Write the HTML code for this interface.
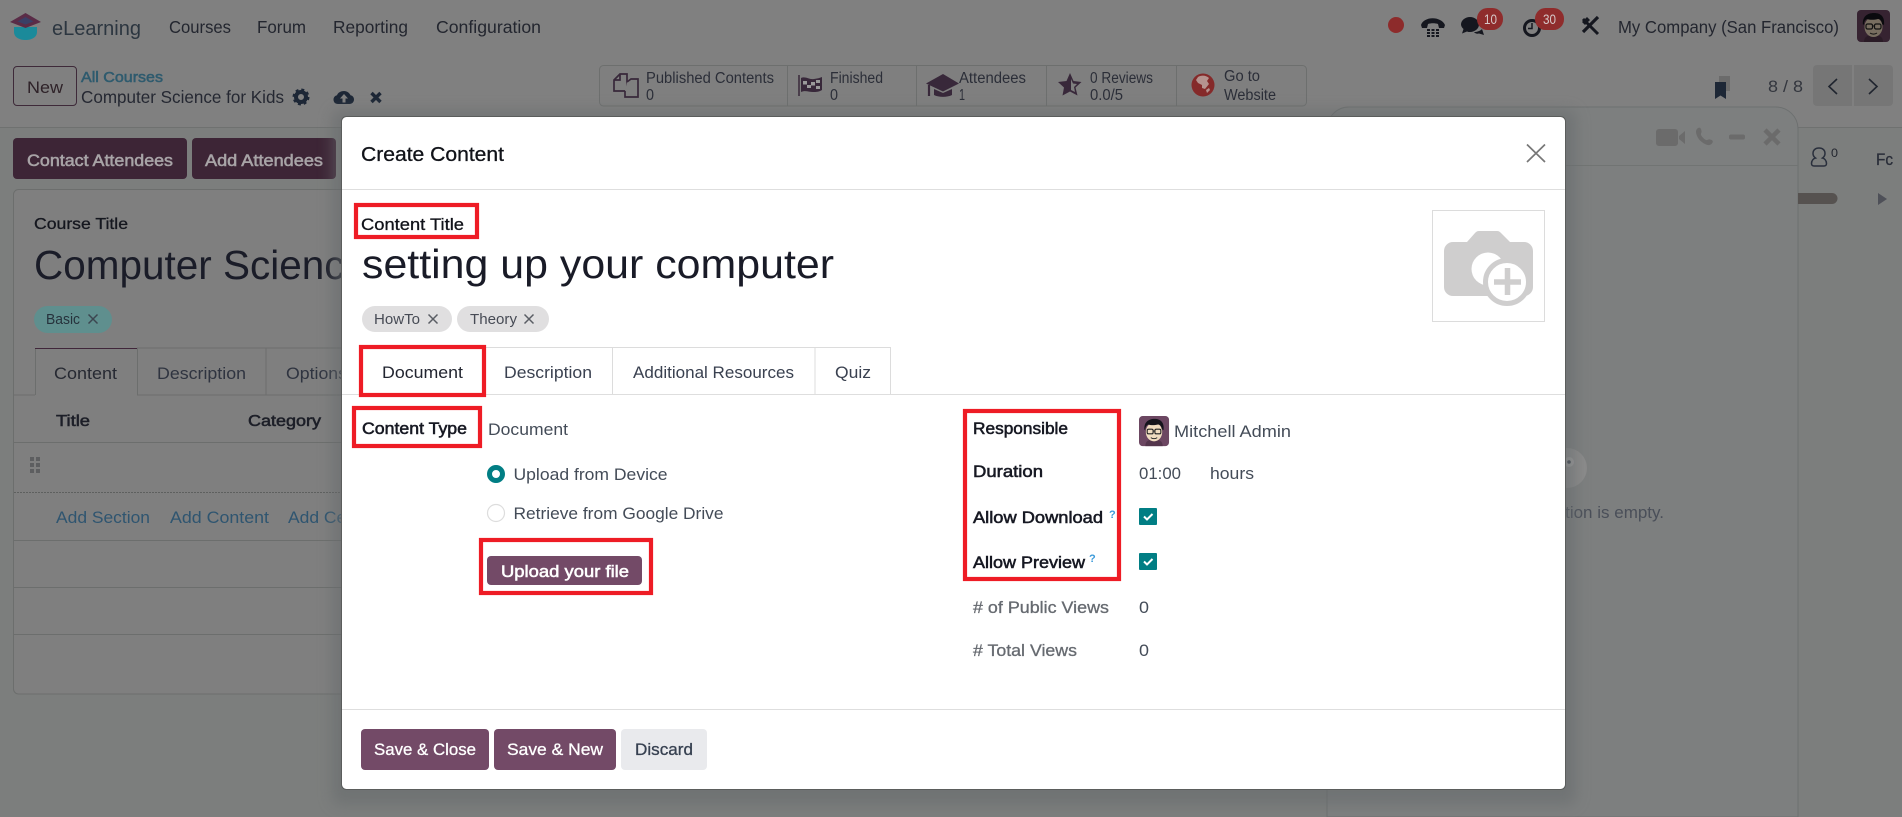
<!DOCTYPE html>
<html lang="en">
<head>
<meta charset="utf-8">
<title>Create Content</title>
<style>
html,body{margin:0;padding:0;width:1902px;height:817px;overflow:hidden;background:#7c7e7d}
svg{display:block}
text{font-family:"Liberation Sans",Arial,sans-serif;white-space:pre}
.b{font-weight:700}
.m{stroke-width:.3px}
.s{stroke-width:.55px}
</style>
</head>
<body>
<svg xmlns="http://www.w3.org/2000/svg" width="1902" height="817" viewBox="0 0 1902 817">
<defs>
<filter id="bl" x="-10%" y="-10%" width="120%" height="120%"><feGaussianBlur stdDeviation="7"/></filter>
<g id="av">
<rect x="0" y="0" width="33" height="32" rx="4" fill="#6c4762"/>
<path d="M7 32c0-5 3-7 9.500-7S26 27 26 32z" fill="#54364c"/>
<ellipse cx="16.500" cy="17" rx="9" ry="10" fill="#f0dcc0"/>
<path d="M6 15C5 7 10 3 17 3s11 4 10 12l-2-1c0-3-2-5-4-5-4 1-8 1-11 0-2 1-3 3-3 5z" fill="#15141c"/>
<rect x="9" y="14" width="6.500" height="5" rx="1.500" fill="none" stroke="#222" stroke-width="1.200"/>
<rect x="17.500" y="14" width="6.500" height="5" rx="1.500" fill="none" stroke="#222" stroke-width="1.200"/>
<path d="M15.500 16h2M13 23c2 1.500 5 1.500 7 0" fill="none" stroke="#222" stroke-width="1"/>
</g>
</defs>

<!-- page background -->
<rect width="1902" height="817" fill="#7c7e7d"/>
<rect width="1902" height="127" fill="#808080"/>
<rect y="127" width="1902" height="1" fill="#6f7170"/>

<!-- logo -->
<path d="M14 27h23v5c0 5-5 8-11.500 8S14 37 14 32z" fill="#1b8a9a"/>
<path d="M25.500 13L41 22 25.500 28 10 22z" fill="#5a2c47"/>
<path d="M25.500 17l8 4.500-8 3-8-3z" fill="#3a3f66"/>

<!-- top nav -->
<text x="52" y="35" font-size="20" fill="#2c3640" textLength="89" lengthAdjust="spacingAndGlyphs">eLearning</text>
<text x="169" y="33" font-size="17.500" fill="#23262f" textLength="62" lengthAdjust="spacingAndGlyphs">Courses</text>
<text x="257" y="33" font-size="17.500" fill="#23262f" textLength="49" lengthAdjust="spacingAndGlyphs">Forum</text>
<text x="333" y="33" font-size="17.500" fill="#23262f" textLength="75" lengthAdjust="spacingAndGlyphs">Reporting</text>
<text x="436" y="33" font-size="17.500" fill="#23262f" textLength="105" lengthAdjust="spacingAndGlyphs">Configuration</text>

<!-- nav right -->
<circle cx="1396" cy="25" r="8" fill="#8d2b2b"/>
<path d="M1421 25c3-9 20-9 24 0l-1 3h-5l-1-4c-3-1-7-1-10 0l-1 4h-5z" fill="#15171f"/>
<g fill="#15171f"><rect x="1427" y="29" width="3" height="2"/><rect x="1431.500" y="29" width="3" height="2"/><rect x="1436" y="29" width="3" height="2"/><rect x="1427" y="32" width="3" height="2"/><rect x="1431.500" y="32" width="3" height="2"/><rect x="1436" y="32" width="3" height="2"/><rect x="1427" y="35" width="3" height="2"/><rect x="1431.500" y="35" width="3" height="2"/><rect x="1436" y="35" width="3" height="2"/></g>
<path d="M1470 17c5 0 9 3.500 9 7.500s-4 7.500-9 7.500c-1 0-2 0-3-.500l-5 2 1.500-4.500c-1.500-1.300-2.500-3-2.500-4.500 0-4 4-7.500 9-7.500z" fill="#15171f"/>
<path d="M1474 32c3 0 6-1 8-3l2 6-5-1.500c-2 .500-4 0-5-1.500z" fill="#15171f"/>
<rect x="1477" y="8" width="26" height="22" rx="10.500" fill="#8f2c2c"/>
<text x="1484" y="24" font-size="13.500" fill="#d6c9c9" textLength="13" lengthAdjust="spacingAndGlyphs">10</text>
<circle cx="1532" cy="28" r="7.500" fill="none" stroke="#15171f" stroke-width="3"/>
<path d="M1532 23v5.500h-4" fill="none" stroke="#15171f" stroke-width="1.500"/>
<rect x="1535" y="8" width="29" height="22" rx="10.500" fill="#8f2c2c"/>
<text x="1543" y="24" font-size="13.500" fill="#d6c9c9" textLength="13" lengthAdjust="spacingAndGlyphs">30</text>
<path d="M1598 17l-15 15" stroke="#15171f" stroke-width="3.200" fill="none"/>
<path d="M1583 19l15 15" stroke="#15171f" stroke-width="3" fill="none"/>
<path d="M1582 22l5-5 3 3-5 5z" fill="#15171f"/>
<text x="1618" y="33" font-size="17.500" fill="#23262f" textLength="221" lengthAdjust="spacingAndGlyphs">My Company (San Francisco)</text>
<g transform="translate(1857 10)"><use href="#av"/><rect width="33" height="32" rx="4" fill="#000" opacity=".5"/></g>

<!-- control panel -->
<rect x="13.500" y="66.500" width="63" height="39" rx="3.500" fill="#808080" stroke="#3e2a39"/>
<text x="27" y="93" font-size="17" fill="#2e2228" textLength="36" lengthAdjust="spacingAndGlyphs">New</text>
<text x="81" y="82" font-size="15" fill="#2f5b6e" stroke="#2f5b6e" class="s" textLength="82" lengthAdjust="spacingAndGlyphs">All Courses</text>
<text x="81" y="103" font-size="17.500" fill="#252832" textLength="203" lengthAdjust="spacingAndGlyphs">Computer Science for Kids</text>
<circle cx="301" cy="97" r="5" fill="none" stroke="#1d2736" stroke-width="4"/>
<circle cx="301" cy="97" r="7.500" fill="none" stroke="#1d2736" stroke-width="2" stroke-dasharray="3 2.900"/>
<path d="M338 104c-3 0-4.500-2-4.500-4.500 0-2 1.500-4 3.500-4.300 1-2.700 4-4.200 7-4.200 3 0 5.500 1.800 6.500 4.300 2.300.400 3.500 2.200 3.500 4.200 0 2.500-2 4.500-4.500 4.500z" fill="#1d2736"/>
<path d="M344 94l-4 4.500h2.500v4h3v-4h2.500z" fill="#808080"/>
<path d="M371.500 93l9 9m0-9l-9 9" stroke="#1d2736" stroke-width="3.400" fill="none"/>

<!-- stat buttons -->
<rect x="599.500" y="65.500" width="707" height="40.500" rx="4" fill="#7f7f7f" stroke="#6d6f6e"/>
<g fill="#6d6f6e"><rect x="787" y="66" width="1" height="40"/><rect x="916" y="66" width="1" height="40"/><rect x="1046" y="66" width="1" height="40"/><rect x="1176" y="66" width="1" height="40"/></g>
<path d="M614 80l6-6h7v17h-13zM620 74v6h-6" fill="none" stroke="#38283a" stroke-width="1.700"/>
<path d="M627 82l4-3h7v18h-13V91" fill="#7f7f7f" stroke="#38283a" stroke-width="1.700"/>
<text x="646" y="83" font-size="15.500" fill="#2b2e38" textLength="128" lengthAdjust="spacingAndGlyphs">Published Contents</text>
<text x="646" y="100" font-size="15.500" fill="#2b2e38" textLength="8" lengthAdjust="spacingAndGlyphs">0</text>
<path d="M799 75v21" stroke="#38283a" stroke-width="1.500"/>
<path d="M801 78c5-2 8 2 13 1 3-.500 6-1 8-2v13c-3 2-6 2-9 2-4 0-8-2-12 0z" fill="#38283a"/>
<g fill="#9a9a9a"><rect x="803" y="81" width="4" height="3.500"/><rect x="811" y="82" width="4" height="3.500"/><rect x="807" y="85" width="4" height="3"/><rect x="816" y="80" width="4" height="3"/><rect x="816" y="86" width="4" height="3"/></g>
<text x="830" y="83" font-size="15.500" fill="#2b2e38" textLength="53" lengthAdjust="spacingAndGlyphs">Finished</text>
<text x="830" y="100" font-size="15.500" fill="#2b2e38" textLength="8" lengthAdjust="spacingAndGlyphs">0</text>
<path d="M926 83.500L943 74l16 9.500-16 8z" fill="#38283a"/>
<path d="M934 89v6c5 2.500 13 2.500 18 0v-6l-9 4z" fill="#38283a"/>
<path d="M929 85v11" stroke="#38283a" stroke-width="2.200"/>
<text x="959" y="83" font-size="15.500" fill="#2b2e38" textLength="67" lengthAdjust="spacingAndGlyphs">Attendees</text>
<text x="959" y="100" font-size="15.500" fill="#2b2e38" textLength="6" lengthAdjust="spacingAndGlyphs">1</text>
<path d="M1070 73l3.500 8 8 1-6 5.500 2 8-7.500-4-7.500 4 1.500-8-6-5.500 8.500-1z" fill="#38283a"/>
<path d="M1071 79v11l4 2-1-5 3-3-4-.500z" fill="#7f7f7f"/>
<text x="1090" y="83" font-size="15.500" fill="#2b2e38" textLength="63" lengthAdjust="spacingAndGlyphs">0 Reviews</text>
<text x="1090" y="100" font-size="15.500" fill="#2b2e38" textLength="33" lengthAdjust="spacingAndGlyphs">0.0/5</text>
<ellipse cx="1203" cy="85" rx="11.500" ry="11.500" fill="#852a2a"/>
<path d="M1198 77c3-2 8-2 11 1l-2 3 2 3-4 5-3-1v-3l-4-2-2-3z" fill="#b5938f"/>
<path d="M1206 90l3-2 1 2-3 3z" fill="#b5938f"/>
<text x="1224" y="81" font-size="15.500" fill="#2b2e38" textLength="36" lengthAdjust="spacingAndGlyphs">Go to</text>
<text x="1224" y="100" font-size="15.500" fill="#2b2e38" textLength="52" lengthAdjust="spacingAndGlyphs">Website</text>

<!-- pager -->
<path d="M1719 76h11v15h-11z" fill="#6b6b6b"/>
<path d="M1715 82h11v17l-5.500-3.500-5.500 3.500z" fill="#1d2736"/>
<text x="1768" y="92" font-size="17" fill="#33363e" textLength="35" lengthAdjust="spacingAndGlyphs">8 / 8</text>
<path d="M1813 69a4 4 0 0 1 4-4h35v41h-35a4 4 0 0 1-4-4z" fill="#767676"/>
<path d="M1854 65h35a4 4 0 0 1 4 4v33a4 4 0 0 1-4 4h-35z" fill="#767676"/>
<path d="M1837 79l-8 7.500 8 7.500M1869 79l8 7.500-8 7.500" fill="none" stroke="#20252f" stroke-width="1.600"/>

<!-- buttons -->
<rect x="13" y="138" width="174" height="41" rx="4" fill="#3d2536"/>
<rect x="192" y="138" width="144" height="41" rx="4" fill="#3d2536"/>
<text x="27" y="166" font-size="17" fill="#a8a4a7" stroke="#a8a4a7" class="s" textLength="146" lengthAdjust="spacingAndGlyphs">Contact Attendees</text>
<text x="205" y="166" font-size="17" fill="#a8a4a7" stroke="#a8a4a7" class="s" textLength="118" lengthAdjust="spacingAndGlyphs">Add Attendees</text>

<!-- left card -->
<rect x="13.500" y="189.500" width="500" height="504.500" rx="5" fill="#7f7f7f" stroke="#6c6e6d"/>
<text x="34" y="229" font-size="16" fill="#15171f" stroke="#15171f" class="m" textLength="94" lengthAdjust="spacingAndGlyphs">Course Title</text>
<text x="34" y="279" font-size="41" fill="#1a1c28" textLength="333" lengthAdjust="spacingAndGlyphs">Computer Science</text>
<rect x="34" y="306" width="78" height="27" rx="13.500" fill="#5f8f8e"/>
<text x="46" y="324" font-size="15" fill="#26323c" textLength="34" lengthAdjust="spacingAndGlyphs">Basic</text>
<path d="M88.500 314.500l9 9m0-9l-9 9" stroke="#3c4650" stroke-width="1.500" fill="none"/>
<path d="M14 395h21M137 395h400" stroke="#6c6e6d" fill="none"/>
<path d="M35.500 395v-47M137.500 395v-47M266 395v-47M137 348h260" stroke="#6c6e6d" fill="none"/>
<path d="M35 348.500h102" stroke="#40263a" fill="none"/>
<text x="54" y="379" font-size="17" fill="#262932" textLength="63" lengthAdjust="spacingAndGlyphs">Content</text>
<text x="157" y="379" font-size="17" fill="#2f3440" textLength="89" lengthAdjust="spacingAndGlyphs">Description</text>
<text x="286" y="379" font-size="17" fill="#2f3440" textLength="61" lengthAdjust="spacingAndGlyphs">Options</text>
<text x="56" y="426" font-size="16" fill="#1d1f28" stroke="#1d1f28" class="s" textLength="34" lengthAdjust="spacingAndGlyphs">Title</text>
<text x="248" y="426" font-size="16" fill="#1d1f28" stroke="#1d1f28" class="s" textLength="73" lengthAdjust="spacingAndGlyphs">Category</text>
<path d="M14 442.500h400" stroke="#6c6e6d"/>
<g fill="#5d5e60"><rect x="30" y="457" width="4" height="4"/><rect x="36" y="457" width="4" height="4"/><rect x="30" y="463" width="4" height="4"/><rect x="36" y="463" width="4" height="4"/><rect x="30" y="469" width="4" height="4"/><rect x="36" y="469" width="4" height="4"/></g>
<path d="M14 492.500h400" stroke="#5e605f" stroke-dasharray="2 1"/>
<text x="56" y="523" font-size="17" fill="#2f5570" textLength="94" lengthAdjust="spacingAndGlyphs">Add Section</text>
<text x="170" y="523" font-size="17" fill="#2f5570" textLength="99" lengthAdjust="spacingAndGlyphs">Add Content</text>
<text x="288" y="523" font-size="17" fill="#2f5570" textLength="128" lengthAdjust="spacingAndGlyphs">Add Certification</text>
<path d="M14 540.500h400M14 587.500h400M14 634.500h400" stroke="#6c6e6d"/>

<!-- chat window -->
<path d="M1327 817V129a22 22 0 0 1 22-22h427a22 22 0 0 1 22 22v688z" fill="#7d7f7f" stroke="#6d7070"/>
<path d="M1327 165.500h471" stroke="#717473"/>
<path d="M1659 129h16a3 3 0 0 1 3 3v11a3 3 0 0 1-3 3h-16a3 3 0 0 1-3-3v-11a3 3 0 0 1 3-3zM1679 136l6-5v13l-6-5z" fill="#6b6b6b"/>
<path d="M1698 128c2-1 3 0 3.500 3 .300 2-1 2.500-.500 4 1 2 3 4 5 5 1.500.500 2-1 4-.500 3 .500 3.500 2 2 4-2 2-4 2-7 .500-4-2-7-5-8.500-9.500-1-3-.500-5 1.500-6.500z" fill="#6b6b6b"/>
<rect x="1729" y="134.500" width="16" height="5" rx="2" fill="#6b6b6b"/>
<path d="M1765 130l14 14m0-14l-14 14" stroke="#6b6b6b" stroke-width="4.500" fill="none"/>

<!-- right side -->
<path d="M1814 166c-1.500 0-2.500-1-2.500-2.500 0-3 2-5 4-5.500-1.500-1-2.500-2.500-2.500-4.500 0-3.500 2.500-5.500 6-5.500s6 2 6 5.500c0 2-1 3.500-2.500 4.500 2 .500 4 2.500 4 5.500 0 1.500-1 2.500-2.500 2.500z" fill="none" stroke="#292f3c" stroke-width="1.500"/>
<text x="1831" y="157" font-size="12" fill="#23262f" textLength="7" lengthAdjust="spacingAndGlyphs">0</text>
<text x="1876" y="165" font-size="17" fill="#292d38" stroke="#292d38" class="m" textLength="17" lengthAdjust="spacingAndGlyphs">Fc</text>
<path d="M1798 193h34a5.500 5.500 0 0 1 0 11h-34z" fill="#565250"/>
<path d="M1878 193l9 6-9 6z" fill="#4e5058"/>

<!-- empty chat -->
<circle cx="1567" cy="468" r="20" fill="#8b8b8b"/>
<circle cx="1569" cy="462" r="5" fill="#9c9c9c"/>
<circle cx="1569" cy="462" r="1.800" fill="#3e4450"/>
<text x="1664" y="518" text-anchor="end" font-size="17" fill="#4a4f59">conversation is empty.</text>

<!-- modal shadow -->
<rect x="332" y="110" width="1244" height="695" rx="8" fill="#666b6c" opacity=".55" filter="url(#bl)"/>
<!-- modal -->
<rect x="341.500" y="116.500" width="1224" height="673" rx="5" fill="#fff" stroke="#5b5d5c"/>
<path d="M342 189.500h1223M342 394.500h1223M342 709.500h1223" stroke="#dedede"/>

<text x="361" y="161" font-size="20" fill="#111319" stroke="#111319" class="m" textLength="143" lengthAdjust="spacingAndGlyphs">Create Content</text>
<path d="M1527 144.500l18 17.500m0-17.500l-18 17.500" stroke="#777" stroke-width="1.700" fill="none"/>

<!-- title area -->
<text x="361" y="230" font-size="16.500" fill="#11131a" stroke="#11131a" class="m" textLength="103" lengthAdjust="spacingAndGlyphs">Content Title</text>
<text x="362" y="278" font-size="41" fill="#191b27" textLength="472" lengthAdjust="spacingAndGlyphs">setting up your computer</text>
<rect x="362" y="306" width="90" height="26" rx="13" fill="#e0dfe0"/>
<rect x="457" y="306" width="92" height="26" rx="13" fill="#e0dfe0"/>
<text x="374" y="324" font-size="15" fill="#474b55" textLength="46" lengthAdjust="spacingAndGlyphs">HowTo</text>
<path d="M428.500 314.500l9 9m0-9l-9 9" stroke="#5a5d64" stroke-width="1.500" fill="none"/>
<text x="470" y="324" font-size="15" fill="#474b55" textLength="47" lengthAdjust="spacingAndGlyphs">Theory</text>
<path d="M524.500 314.500l9 9m0-9l-9 9" stroke="#5a5d64" stroke-width="1.500" fill="none"/>
<!-- image box -->
<rect x="1432.500" y="210.500" width="112" height="111" fill="#fff" stroke="#dcdcdc"/>
<path d="M1453 242h14l8-9c1-1 2-2 4-2h18c2 0 3 1 4 2l9 9h14a9 9 0 0 1 9 9v36a9 9 0 0 1-9 9h-71a9 9 0 0 1-9-9v-36a9 9 0 0 1 9-9z" fill="#cfcece"/>
<circle cx="1488" cy="269" r="16.500" fill="#fff"/>
<circle cx="1507" cy="282" r="21.500" fill="#fff" stroke="#cfcece" stroke-width="5"/>
<path d="M1494 282h27M1507.500 268v27" stroke="#cfcece" stroke-width="5.500" fill="none"/>

<!-- tabs -->
<path d="M612.500 347v47M815 347v47M890.500 347v47M486 347.500h405" stroke="#dcdcdc" fill="none"/>
<rect x="361" y="347" width="123" height="48" fill="#fff"/>
<text x="382" y="378" font-size="17" fill="#222530" textLength="81" lengthAdjust="spacingAndGlyphs">Document</text>
<text x="504" y="378" font-size="17" fill="#3a4150" textLength="88" lengthAdjust="spacingAndGlyphs">Description</text>
<text x="633" y="378" font-size="17" fill="#3a4150" textLength="161" lengthAdjust="spacingAndGlyphs">Additional Resources</text>
<text x="835" y="378" font-size="17" fill="#3a4150" textLength="36" lengthAdjust="spacingAndGlyphs">Quiz</text>

<!-- left group -->
<text x="362" y="434" font-size="16.500" fill="#171923" stroke="#171923" class="s" textLength="105" lengthAdjust="spacingAndGlyphs">Content Type</text>
<text x="488" y="435" font-size="17" fill="#444c58" textLength="80" lengthAdjust="spacingAndGlyphs">Document</text>
<circle cx="496" cy="474" r="6.500" fill="#fff" stroke="#017e84" stroke-width="5"/>
<text x="513.500" y="480" font-size="17" fill="#444c58" textLength="154" lengthAdjust="spacingAndGlyphs">Upload from Device</text>
<circle cx="496" cy="513" r="8.500" fill="#fff" stroke="#dddddd" stroke-width="1.200"/>
<text x="513.500" y="519" font-size="17" fill="#444c58" textLength="210" lengthAdjust="spacingAndGlyphs">Retrieve from Google Drive</text>
<rect x="487" y="556" width="155" height="29" rx="4" fill="#734a67"/>
<text x="501" y="577" font-size="17" fill="#fff" stroke="#fff" class="s" textLength="128" lengthAdjust="spacingAndGlyphs">Upload your file</text>

<!-- right group -->
<text x="973" y="434" font-size="16.500" fill="#171923" stroke="#171923" class="s" textLength="95" lengthAdjust="spacingAndGlyphs">Responsible</text>
<text x="973" y="477" font-size="16.500" fill="#171923" stroke="#171923" class="s" textLength="70" lengthAdjust="spacingAndGlyphs">Duration</text>
<text x="973" y="523" font-size="16.500" fill="#171923" stroke="#171923" class="s" textLength="130" lengthAdjust="spacingAndGlyphs">Allow Download</text>
<text x="1109" y="518" font-size="11" fill="#3b9ad9" class="b">?</text>
<text x="973" y="568" font-size="16.500" fill="#171923" stroke="#171923" class="s" textLength="112" lengthAdjust="spacingAndGlyphs">Allow Preview</text>
<text x="1089" y="562" font-size="11" fill="#3b9ad9" class="b">?</text>
<text x="973" y="613" font-size="16.500" fill="#666a70" stroke="#666a70" class="m" textLength="136" lengthAdjust="spacingAndGlyphs"># of Public Views</text>
<text x="973" y="656" font-size="16.500" fill="#666a70" stroke="#666a70" class="m" textLength="104" lengthAdjust="spacingAndGlyphs"># Total Views</text>

<g transform="translate(1139 416) scale(.91 .94)"><use href="#av"/></g>
<text x="1174" y="437" font-size="17" fill="#444c58" textLength="117" lengthAdjust="spacingAndGlyphs">Mitchell Admin</text>
<text x="1139" y="479" font-size="17" fill="#444c58" textLength="42" lengthAdjust="spacingAndGlyphs">01:00</text>
<text x="1210" y="479" font-size="17" fill="#444c58" textLength="44" lengthAdjust="spacingAndGlyphs">hours</text>
<rect x="1139" y="508" width="18" height="17" rx="1" fill="#017e84"/>
<path d="M1144 516.500l3 3 5.500-5.500" stroke="#fff" stroke-width="2" fill="none"/>
<rect x="1139" y="553" width="18" height="17" rx="1" fill="#017e84"/>
<path d="M1144 561.500l3 3 5.500-5.500" stroke="#fff" stroke-width="2" fill="none"/>
<text x="1139" y="613" font-size="17" fill="#444c58" textLength="10" lengthAdjust="spacingAndGlyphs">0</text>
<text x="1139" y="656" font-size="17" fill="#444c58" textLength="10" lengthAdjust="spacingAndGlyphs">0</text>

<!-- footer -->
<rect x="361" y="729" width="128" height="41" rx="4" fill="#734a67"/>
<rect x="494" y="729" width="122" height="41" rx="4" fill="#734a67"/>
<rect x="621" y="729" width="86" height="41" rx="4" fill="#e9eaed"/>
<text x="374" y="755" font-size="17" fill="#fff" stroke="#fff" class="m" textLength="102" lengthAdjust="spacingAndGlyphs">Save &amp; Close</text>
<text x="507" y="755" font-size="17" fill="#fff" stroke="#fff" class="m" textLength="96" lengthAdjust="spacingAndGlyphs">Save &amp; New</text>
<text x="635" y="755" font-size="17" fill="#374151" stroke="#374151" class="m" textLength="58" lengthAdjust="spacingAndGlyphs">Discard</text>

<!-- red annotation boxes -->
<g fill="none" stroke="#ee1c25" stroke-width="4.200">
<rect x="356" y="205" width="121" height="32"/>
<rect x="361" y="347" width="123" height="48"/>
<rect x="354" y="408" width="126" height="38"/>
<rect x="481" y="540" width="170" height="53"/>
<rect x="965" y="411" width="154" height="168"/>
</g>
</svg>
</body>
</html>
